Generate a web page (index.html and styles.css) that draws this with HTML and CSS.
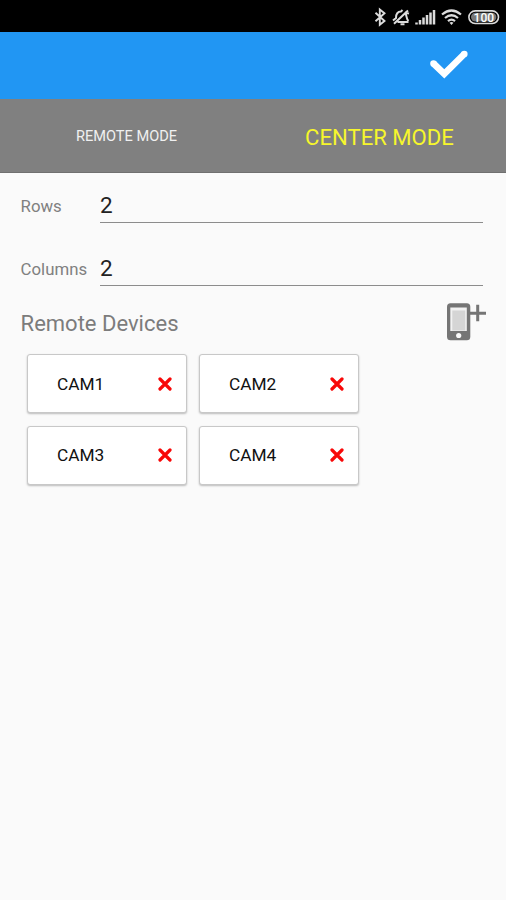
FILE: index.html
```html
<!DOCTYPE html>
<html lang="en">
<head>
<meta charset="utf-8">
<title>Remote Devices</title>
<link rel="stylesheet" href="styles.css">
</head>
<body>
<div class="status">
  <svg width="140" height="32" viewBox="366 0 140 32" fill="none" stroke="#dcdcdc">
    <path d="M375.500 12.800l9 8.200-4.700 3.800V9.400l4.700 3.800-9 8" stroke-width="1.900"/>
    <path d="M393 20.500l3-2.500c0-4 1.500-6.500 5-6.500l1.500-1.500M397.500 22h11M405.500 13.500c1.500 2.500.5 5 3 7.500M400.500 24.300h4M394 23.800l14-13.300M405 12.500l4 1" stroke-width="2"/>
    <path d="M416.500 24.500v-2M420 24.500v-4.500M423.500 24.500v-7M427 24.500v-9.500M430.500 24.500V12.500M434 24.500V10" stroke-width="2.500"/>
    <path d="M442 14.500q9.500-8 19 0M445 18q6.500-5.500 13 0M448 21.200q3.500-3 7 0" stroke-width="2.200"/>
    <path d="M451.500 25l-2-2.300q2-1.400 4 0z" fill="#dcdcdc" stroke="none"/>
    <rect x="468.900" y="10.900" width="29.600" height="12.600" rx="6.300" stroke-width="1.600"/>
    <rect x="471" y="12.700" width="25.400" height="8.800" rx="4.400" fill="#777" stroke="none"/>
    <text x="483.800" y="21.500" class="battery">100</text>
  </svg>
</div>
<header class="appbar">
  <svg width="38" height="29" viewBox="430 50 38 29" fill="none" stroke="#fff" stroke-width="6.600" stroke-linejoin="miter">
    <path d="M433.500 63.500L444.300 73.900L464.300 54"/>
    <path d="M433.500 63.500h.01M464.300 54h.01" stroke-linecap="round"/>
  </svg>
</header>
<nav class="tabs">
  <div class="tab">REMOTE MODE</div>
  <div class="tab active">CENTER MODE</div>
</nav>
<main>
  <div class="field"><span class="label">Rows</span><span class="value">2</span></div>
  <div class="field"><span class="label">Columns</span><span class="value">2</span></div>
  <div class="heading">
    <h2>Remote Devices</h2>
    <svg width="40" height="38" viewBox="447 303 40 38">
      <rect x="447" y="303.300" width="23.300" height="37" rx="3.500" fill="#757575"/>
      <path d="M450.300 307.500h16.500v23.500h-16.500z" fill="#f2f2f2"/>
      <path d="M452.300 310.500h13v20h-13z" fill="#d5d5d5"/>
      <circle cx="458.700" cy="335.500" r="2.600" fill="#fafafa"/>
      <path d="M470 313.300h16M477.700 304.800v16.500" stroke="#757575" stroke-width="3"/>
    </svg>
  </div>
  <div class="grid">
    <div class="card"><span>CAM1</span><svg class="x" viewBox="0 0 14 14"><path d="M2 2l10 10M12 2L2 12"/></svg></div>
    <div class="card"><span>CAM2</span><svg class="x" viewBox="0 0 14 14"><path d="M2 2l10 10M12 2L2 12"/></svg></div>
    <div class="card"><span>CAM3</span><svg class="x" viewBox="0 0 14 14"><path d="M2 2l10 10M12 2L2 12"/></svg></div>
    <div class="card"><span>CAM4</span><svg class="x" viewBox="0 0 14 14"><path d="M2 2l10 10M12 2L2 12"/></svg></div>
  </div>
</main>
</body>
</html>
```
FILE: styles.css
```css
* { box-sizing: border-box; }
body {
  margin: 0;
  height: 900px;
  overflow: hidden;
  background: #fafafa;
  font-family: Roboto, "Liberation Sans", sans-serif;
}
svg { display: block; flex: none; }
.status { height: 32px; background: #000; display: flex; justify-content: flex-end; }
.battery { font-size: 12px; font-weight: 500; fill: #fff; stroke: none; text-anchor: middle; }
.appbar { height: 67px; background: #2196f3; display: flex; justify-content: flex-end; padding: 18px 38px 0 0; }
.tabs { height: 74px; background: #808080; border-bottom: 1px solid #707070; display: flex; }
.tab { flex: 1; display: flex; align-items: center; justify-content: center; font-size: 14.6px; color: #f0f0f0; }
.active { font-size: 22.1px; color: #f6f62c; padding-top: 3px; }
main { padding: 17px 19px 0 20.6px; }
.field { display: flex; height: 33px; margin: 0 4px 30px 0; }
.label { width: 79.4px; flex: none; font-size: 16.8px; line-height: 33px; color: #808080; }
.value { flex: 1; border-bottom: 1px solid #8c8c8c; font-size: 22.5px; line-height: 31px; color: #222; }
.heading { display: flex; justify-content: space-between; margin-top: -13px; height: 51px; }
h2 { margin: 7px 0 0; font-size: 22px; line-height: 28px; font-weight: 400; color: #7c7c7c; }
.grid { display: grid; grid-template-columns: 160px 160px; grid-auto-rows: 59px; gap: 13px 12px; padding-left: 6.4px; }
.card {
  display: flex;
  align-items: center;
  justify-content: space-between;
  padding: 0 14px 0 29px;
  background: #fff;
  border: 1px solid #c8c8c8;
  border-radius: 3px;
  box-shadow: 0 1px 2px rgba(0, 0, 0, .25);
  font-size: 17.3px;
  color: #111;
}
.card:nth-child(n+3) { padding-bottom: 1px; }
.x { width: 14px; height: 14px; fill: none; stroke: #f80808; stroke-width: 3.2; stroke-linecap: round; }
```
